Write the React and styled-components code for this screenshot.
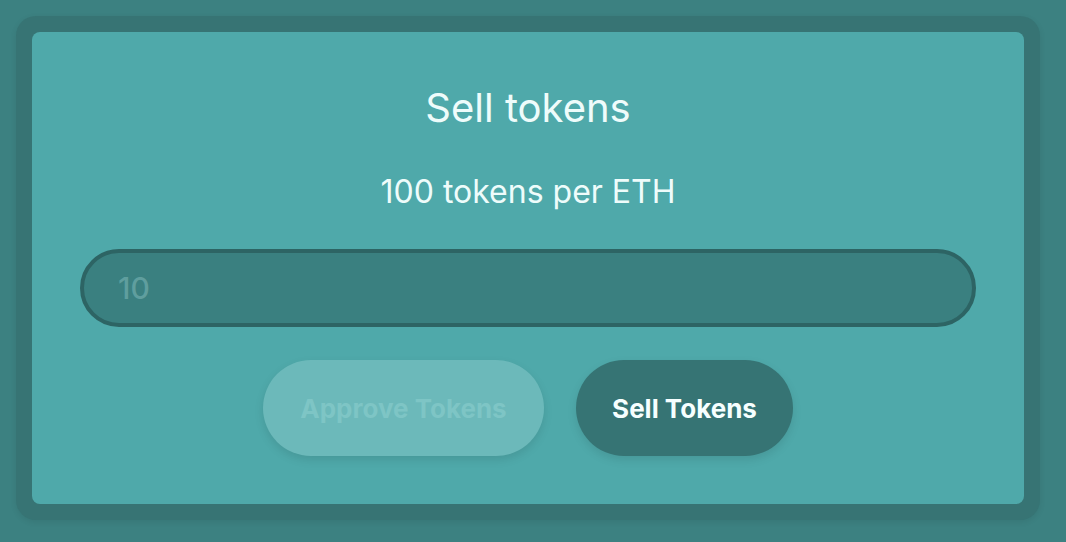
import React from 'react';
import styled, { createGlobalStyle } from 'styled-components';

const GlobalStyle = createGlobalStyle`
  html, body {
    margin: 0;
    padding: 0;
    background: #3c8181;
    font-family: 'Inter', 'Noto Sans', sans-serif;
  }
`;

const Page = styled.div`
  padding: 16px 26px 22px 16px;
`;

const Frame = styled.div`
  padding: 16px;
  border-radius: 20px;
  background: #377474;
  box-shadow: 0 2px 6px rgba(0, 0, 0, 0.08);
`;

const Card = styled.div`
  display: flex;
  flex-direction: column;
  align-items: center;
  padding: 56px 48px 48px 48px;
  border-radius: 8px;
  background: #4fa9aa;
  color: #eefcfb;
`;

const Title = styled.h1`
  margin: 0;
  font-size: 40px;
  font-weight: 400;
  line-height: 40px;
`;

const Rate = styled.p`
  margin: 48px 0 0 0;
  font-size: 32px;
  font-weight: 400;
  line-height: 32px;
`;

const Input = styled.input`
  box-sizing: border-box;
  width: 100%;
  height: 78px;
  margin-top: 41px;
  padding: 0 34px;
  border: 4px solid #2d6464;
  border-radius: 39px;
  background: #3a8080;
  font-family: inherit;
  font-size: 30px;
  font-weight: 500;
  color: #eefcfb;
  outline: none;

  &::placeholder {
    color: #5f9e9e;
  }
`;

const Actions = styled.div`
  display: flex;
  gap: 32px;
  margin-top: 33px;
`;

const Button = styled.button`
  height: 96px;
  padding: 0 30px;
  border: none;
  border-radius: 48px;
  font-family: inherit;
  font-size: 26px;
  font-weight: 700;
  background: ${p => (p.disabled ? '#6cb9ba' : '#367474')};
  color: ${p => (p.disabled ? '#7ec5c5' : '#f6ffff')};
  box-shadow: 0 4px 10px rgba(0, 0, 0, 0.1);
  cursor: ${p => (p.disabled ? 'default' : 'pointer')};
`;

const App = () => {
  return (
    <Page>
      <GlobalStyle />
      <Frame>
        <Card>
          <Title>Sell tokens</Title>
          <Rate>100 tokens per ETH</Rate>
          <Input placeholder="10" />
          <Actions>
            <Button disabled style={{ width: 281 }}>Approve Tokens</Button>
            <Button style={{ width: 217 }}>Sell Tokens</Button>
          </Actions>
        </Card>
      </Frame>
    </Page>
  );
};

export default App;
